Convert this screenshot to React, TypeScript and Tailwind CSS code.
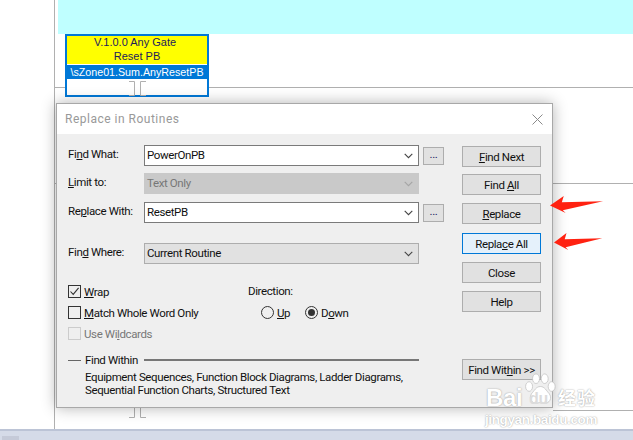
import type { ReactNode } from 'react';

const uiFont = "font-['Roboto','Noto_Sans',sans-serif]";

const Connector = ({ className }: { className: string }) => (
  <svg className={className} width="18" height="15" viewBox="0 0 18 15" fill="none" stroke="#b0b0b0">
    <path d="M0 .5h5.5v14H0M17 .5h-5.5v14H17" />
  </svg>
);

const Chevron = ({ color = '#444' }: { color?: string }) => (
  <svg width="9" height="6" viewBox="0 0 9 6" fill="none" stroke={color} strokeWidth="1.1">
    <path d="M.7 .8 4.5 4.6 8.3 .8" />
  </svg>
);

const Combo = ({ value, variant = 'input' }: { value: string; variant?: 'input' | 'disabled' | 'select' }) => {
  const styles = {
    input: 'bg-white border-[#7a7a7a] text-[#111]',
    disabled: 'bg-[#c9c9c9] border-[#c9c9c9] text-[#777]',
    select: 'bg-[#e1e1e1] border-[#adadad] text-[#111]',
  };
  return (
    <div className={`flex h-[21px] w-[275px] items-center justify-between border pl-[2px] pr-[5px] ${styles[variant]}`}>
      <span className="pt-[1px]">{value}</span>
      <Chevron color={variant === 'disabled' ? '#a5a5a5' : '#444'} />
    </div>
  );
};

const Row = ({ label, className = '', extra, children }: { label: ReactNode; className?: string; extra?: boolean; children: ReactNode }) => (
  <div className={`flex h-[21px] items-center ${className}`}>
    <div className="w-[76px] pb-[1px] text-[#111]">{label}</div>
    {children}
    {extra && (
      <div className="ml-[4px] flex h-[18px] w-[21px] items-center justify-center border border-[#adadad] bg-[#e1e1e1] pb-[1px] text-[#1a1a60]">
        ...
      </div>
    )}
  </div>
);

const DialogButton = ({ children, focused, className = '' }: { children: ReactNode; focused?: boolean; className?: string }) => (
  <div
    className={`flex h-[21px] w-[79px] items-center justify-center whitespace-nowrap border pt-[2px] text-[#111] ${
      focused ? 'border-[#0078d7] bg-[#e5f1fb]' : 'border-[#adadad] bg-[#e1e1e1]'
    } ${className}`}
  >
    <span>{children}</span>
  </div>
);

const Checkbox = ({ label, checked, disabled }: { label: ReactNode; checked?: boolean; disabled?: boolean }) => (
  <div className={`flex h-[13px] items-center gap-[3px] ${disabled ? 'text-[#777]' : 'text-[#111]'}`}>
    <div className={`flex h-[13px] w-[13px] items-center justify-center border ${disabled ? 'border-[#cccccc]' : 'border-[#333]'}`}>
      {checked && (
        <svg width="11" height="11" viewBox="0 0 11 11" fill="none" stroke="#333" strokeWidth="1.1">
          <path d="M1.5 5.5 4.2 8.4 9.6 1.8" />
        </svg>
      )}
    </div>
    <span className="pt-[2px]">{label}</span>
  </div>
);

const Radio = ({ label, checked, className = '' }: { label: ReactNode; checked?: boolean; className?: string }) => (
  <div className={`flex items-center gap-[3px] text-[#111] ${className}`}>
    <div className="flex h-[13px] w-[13px] items-center justify-center rounded-full border border-[#333] bg-transparent">
      {checked && <div className="h-[7px] w-[7px] rounded-full bg-[#333]" />}
    </div>
    <span className="pt-[2px]">{label}</span>
  </div>
);

const Arrow = ({ className }: { className: string }) => (
  <svg className={className} viewBox="0 0 56 20" preserveAspectRatio="none" fill="#ff2211">
    <path d="M0 10 14 0 12 6.5 54 5.5 13 15 16 18Z" />
  </svg>
);

const Watermark = () => (
  <div className="absolute left-[485px] top-[372px] h-[56px] w-[114px] text-white [text-shadow:0_0_1.5px_#8a8a8a]">
    <span className="absolute left-[1px] top-[13px] font-['Liberation_Sans',sans-serif] text-[24px] font-bold leading-[26px]">Bai</span>
    <svg className="absolute left-[38px] top-0" width="33" height="36" viewBox="0 0 38 38" fill="#ffffff" stroke="#bdbdbd" strokeWidth="0.8">
      <ellipse cx="7" cy="15" rx="4" ry="5.5" />
      <ellipse cx="15" cy="6" rx="4" ry="5.5" />
      <ellipse cx="25" cy="6" rx="4" ry="5.5" />
      <ellipse cx="33" cy="15" rx="4" ry="5.5" />
      <path d="M20 15c5 0 7 5 10 8 4 5 1 12-6 11-3 0-5-1-7 0-7 1-11-5-7-11 3-3 5-8 10-8Z" />
    </svg>
    <span className="absolute left-[44px] top-[18px] font-['Liberation_Sans',sans-serif] text-[16px] font-bold leading-[18px] text-[#dcdcdc] [text-shadow:none]">du</span>
    <span className="absolute left-[73px] top-[14px] font-['Noto_Sans_CJK_SC',sans-serif] text-[18px] font-bold leading-[22px] tracking-[1px]">经验</span>
    <span className="absolute left-0 top-[40px] whitespace-nowrap font-['Liberation_Sans',sans-serif] text-[13.5px] font-bold leading-[15px]">jingyan.baidu.com</span>
  </div>
);

export default function App() {
  return (
    <div className={`relative flex h-[440px] w-[633px] flex-col overflow-hidden bg-white text-[11.5px] tracking-[-0.38px] ${uiFont}`}>
      <div className="flex min-h-0 flex-1">
        <div className="w-[55px] shrink-0 border-r border-[#b0b0b0]" />
        <div className="flex min-w-0 flex-1 flex-col">
          {/* rung 0 */}
          <div className="h-[88px] border-b border-[#b0b0b0]">
            <div className="ml-[3px] h-[34px] bg-[#bfffff]" />
            <div className="ml-[10px] h-[63px] w-[144px] border-2 border-[#0078d7] bg-white font-['Liberation_Sans',sans-serif] text-[11px] tracking-normal">
              <div className="flex h-[28px] flex-col items-center justify-center bg-[#ffff00] pb-[2px] leading-[14px] text-[#1c1c5c]">
                <span className="pr-[4px]">V.1.0.0 Any Gate</span>
                <span>Reset PB</span>
              </div>
              <div className="mt-[1px] flex h-[14px] items-center justify-center whitespace-nowrap bg-[#0078d7] text-[10.7px] text-white">\sZone01.Sum.AnyResetPB</div>
            </div>
          </div>
          {/* rung 1 */}
          <div className="h-[96px] border-b border-[#b0b0b0]" />
          {/* rung 2 */}
          <div className="flex h-[227px] justify-end">
            <div className="h-full w-[80px] border-b border-[#b0b0b0]" />
          </div>
        </div>
      </div>

      <div className="h-[11px] shrink-0 border-t-2 border-[#bcc4d6] bg-[#d5dbe8]">
        <div className="ml-[2px] mt-[5px] h-[4px] w-[17px] bg-[#c5cad8]" />
      </div>

      <Connector className="absolute left-[129px] top-[81px]" />
      <Connector className="absolute left-[129px] top-[403px]" />

      {/* dialog */}
      <div className="absolute left-[56px] top-[103px] flex h-[305px] w-[497px] flex-col border border-[#a8a8a8] bg-[#efefef] shadow-[0_0_14px_rgba(0,0,0,0.3)]">
        <div className="flex h-[30px] shrink-0 items-center justify-between bg-white pl-[8px] pr-[9px] text-[12px] tracking-[0.5px] text-[#999]">
          <span>Replace in Routines</span>
          <svg width="11" height="11" viewBox="0 0 11 11" fill="none" stroke="#8a8a8a" strokeWidth="1">
            <path d="M.5 .5l10 10M10.5 .5l-10 10" />
          </svg>
        </div>
        <div className="flex min-h-0 flex-1 pl-[11px]">
          <div className="w-[394px] shrink-0">
            <Row label={<>Fi<u>n</u>d What:</>} className="mt-[11px]" extra>
              <Combo value="PowerOnPB" />
            </Row>
            <Row label={<><u>L</u>imit to:</>} className="mt-[7px]">
              <Combo value="Text Only" variant="disabled" />
            </Row>
            <Row label={<>Re<u>p</u>lace With:</>} className="mt-[8px]" extra>
              <Combo value="ResetPB" />
            </Row>
            <Row label={<>Fin<u>d</u> Where:</>} className="mt-[20px]">
              <Combo value="Current Routine" variant="select" />
            </Row>

            <div className="mt-[21px] flex">
              <div className="flex w-[180px] flex-col gap-[8px]">
                <Checkbox checked label={<><u>W</u>rap</>} />
                <Checkbox label={<><u>M</u>atch Whole Word Only</>} />
                <Checkbox disabled label={<>Use Wi<u>l</u>dcards</>} />
              </div>
              <div className="text-[#111]">
                <div className="h-[13px] leading-[13px]">Direction:</div>
                <div className="mt-[8px] flex h-[13px] pl-[13px]">
                  <Radio label={<><u>U</u>p</>} className="w-[44px]" />
                  <Radio checked label={<>D<u>o</u>wn</>} />
                </div>
              </div>
            </div>

            <div className="mt-[13px] flex h-[14px] items-center text-[#111]">
              <div className="h-[1px] w-[13px] bg-[#666]" />
              <span className="ml-[4px] w-[59px] whitespace-nowrap pt-[1px]">Find Within</span>
              <div className="h-[2px] w-[275px] bg-[#777]" />
            </div>
            <div className="mt-[4px] pl-[17px] leading-[13px] text-[#111]">
              <div>Equipment Sequences, Function Block Diagrams, Ladder Diagrams,</div>
              <div>Sequential Function Charts, Structured Text</div>
            </div>
          </div>

          <div className="flex flex-col pt-[12px]">
            <DialogButton><u>F</u>ind Next</DialogButton>
            <DialogButton className="mt-[7px]">Find <u>A</u>ll</DialogButton>
            <DialogButton className="mt-[8px]"><u>R</u>eplace</DialogButton>
            <DialogButton focused className="mt-[9px]">Repla<u>c</u>e All</DialogButton>
            <DialogButton className="mt-[8px]">Close</DialogButton>
            <DialogButton className="mt-[8px]">Help</DialogButton>
            <DialogButton className="mt-[47px]">Find Wit<u>h</u>in &gt;&gt;</DialogButton>
          </div>
        </div>
      </div>

      <Arrow className="absolute left-[550px] top-[196px] h-[19px] w-[55px]" />
      <Arrow className="absolute left-[554px] top-[233px] h-[19px] w-[50px]" />
      <Watermark />
    </div>
  );
}
